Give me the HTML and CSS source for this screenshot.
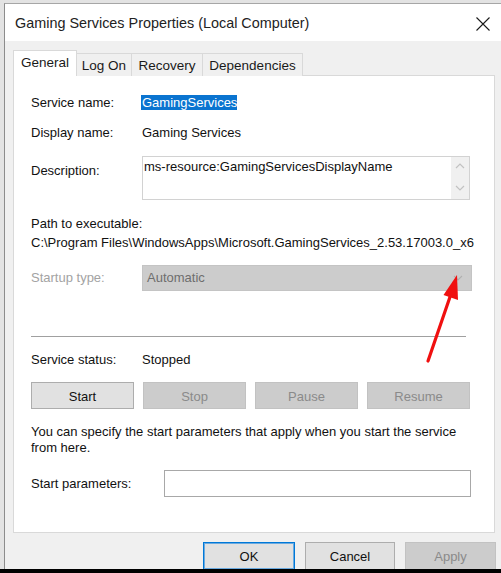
FILE: index.html
```html
<!DOCTYPE html>
<html>
<head>
<meta charset="utf-8">
<link rel="stylesheet" href="styles.css">
</head>
<body>
<div class="page">
  <div class="dialog">
    <div class="titlebar">
      <span class="title">Gaming Services Properties (Local Computer)</span>
      <svg class="close" width="14" height="14" viewBox="0 0 14 14"><path d="M0.5 0.5 L13.5 13.5 M13.5 0.5 L0.5 13.5" stroke="#1a1a1a" stroke-width="1.1" fill="none"/></svg>
    </div>
    <div class="body">
      <div class="tabs">
        <div class="tab active">General</div>
        <div class="tab">Log On</div>
        <div class="tab">Recovery</div>
        <div class="tab">Dependencies</div>
      </div>
      <div class="panel">
        <div class="row r1">
          <span class="label">Service name:</span>
          <span class="value"><span class="selected">GamingServices</span></span>
        </div>
        <div class="row r2">
          <span class="label">Display name:</span>
          <span class="value">Gaming Services</span>
        </div>
        <div class="row r3">
          <span class="label">Description:</span>
          <div class="desc">
            <div class="desc-text">ms-resource:GamingServicesDisplayName</div>
            <div class="scroll">
              <svg width="10" height="6" viewBox="0 0 10 6"><path d="M1 5 L5 1 L9 5" stroke="#c2c2c2" stroke-width="1.2" fill="none"/></svg>
              <svg width="10" height="6" viewBox="0 0 10 6"><path d="M1 1 L5 5 L9 1" stroke="#c2c2c2" stroke-width="1.2" fill="none"/></svg>
            </div>
          </div>
        </div>
        <div class="path-label">Path to executable:</div>
        <div class="path">C:\Program Files\WindowsApps\Microsoft.GamingServices_2.53.17003.0_x6</div>
        <div class="row r5">
          <span class="label disabled">Startup type:</span>
          <div class="combo">
            <span>Automatic</span>
            <svg width="10" height="6" viewBox="0 0 10 6"><path d="M1 1 L5 5 L9 1" stroke="#b0b0b0" stroke-width="1.1" fill="none"/></svg>
          </div>
        </div>
        <div class="sep"></div>
        <div class="row r6">
          <span class="label">Service status:</span>
          <span class="value">Stopped</span>
        </div>
        <div class="btnrow">
          <div class="btn">Start</div>
          <div class="btn off">Stop</div>
          <div class="btn off">Pause</div>
          <div class="btn off">Resume</div>
        </div>
        <div class="note">You can specify the start parameters that apply when you start the service<br>from here.</div>
        <div class="row r7">
          <span class="label wide">Start parameters:</span>
          <div class="input"></div>
        </div>
      </div>
      <div class="footer">
        <div class="btn fbtn ok">OK</div>
        <div class="btn fbtn cancel">Cancel</div>
        <div class="btn fbtn off apply">Apply</div>
      </div>
    </div>
  </div>
  <div class="bottom"></div>
</div>
<svg class="arrow" width="501" height="573" viewBox="0 0 501 573">
  <line x1="428" y1="361" x2="451" y2="294" stroke="#f01010" stroke-width="3.2" stroke-linecap="round"/>
  <polygon points="457,275 443.5,295 458,300" fill="#f01010"/>
</svg>
</body>
</html>
```

FILE: styles.css
```css
html, body {
  margin: 0;
  padding: 0;
  height: 100%;
  overflow: hidden;
}
body {
  background: #e3e3e3;
  font-family: "Liberation Sans", Arial, sans-serif;
  font-size: 13px;
  color: #111;
  position: relative;
}
.page {
  display: flex;
  flex-direction: column;
  height: 573px;
  padding-top: 3px;
  box-sizing: border-box;
}
.dialog {
  margin-left: 4px;
  width: 497px;
  height: 566px;
  border-left: 1px solid #8c8c8c;
  border-top: 1px solid #a6a6a6;
  box-sizing: border-box;
  display: flex;
  flex-direction: column;
  background: #f0f0f0;
}
.titlebar {
  height: 37px;
  background: #fff;
  display: flex;
  align-items: center;
  padding-left: 10px;
  flex-shrink: 0;
}
.title {
  font-size: 14.4px;
  color: #222;
  flex: 1;
  padding-top: 1px;
}
.close {
  margin-right: 11px;
  margin-top: 2px;
}
.body {
  flex: 1;
  display: flex;
  flex-direction: column;
  padding: 9px 6px 0 8px;
}
.tabs {
  display: flex;
  align-items: flex-end;
  height: 26px;
  margin-bottom: -1px;
  position: relative;
  z-index: 1;
}
.tab {
  height: 23px;
  box-sizing: border-box;
  border: 1px solid #d9d9d9;
  border-bottom: none;
  border-left: none;
  background: #f0f0f0;
  display: flex;
  align-items: center;
  justify-content: center;
  font-size: 13.5px;
  color: #1a1a1a;
}
.tab:nth-child(2) { width: 55px; }
.tab:nth-child(3) { width: 71px; }
.tab:nth-child(4) { width: 100px; }
.tab.active {
  height: 26px;
  width: 64px;
  background: #fff;
  border-left: 1px solid #d9d9d9;
  padding-bottom: 3px;
}
.panel {
  height: 458px;
  box-sizing: border-box;
  background: #fff;
  border: 1px solid #d9d9d9;
  padding: 19px 0 0 17px;
  display: flex;
  flex-direction: column;
}
.row {
  display: flex;
  align-items: center;
  line-height: 16px;
}
.label {
  width: 111px;
  flex-shrink: 0;
}
.label.disabled { color: #a3a3a3; }
.label.wide { width: 133px; }
.selected {
  background: #0a74d0;
  color: #fff;
  padding: 0 0 0 1px;
  margin-left: -1px;
  display: inline-block;
  line-height: 15px;
}
.r2 { margin-top: 14px; }
.r3 {
  margin-top: 15px;
  align-items: flex-start;
}
.r3 .label { margin-top: 7px; }
.desc {
  width: 328px;
  height: 44px;
  box-sizing: border-box;
  border: 1px solid #d2d2d2;
  display: flex;
}
.desc-text {
  flex: 1;
  padding: 2px 0 0 1px;
}
.scroll {
  width: 18px;
  background: #f0f0f0;
  display: flex;
  flex-direction: column;
  align-items: center;
  justify-content: space-between;
  padding: 6px 0 8px;
}
.path-label {
  margin-top: 14px;
  line-height: 19px;
}
.path {
  line-height: 19px;
  white-space: nowrap;
}
.r5 { margin-top: 13px; }
.combo {
  width: 330px;
  height: 26px;
  box-sizing: border-box;
  background: #cccccc;
  border: 1px solid #c4c4c4;
  color: #6e6e6e;
  display: flex;
  align-items: center;
  justify-content: space-between;
  padding: 0 8px 0 4px;
}
.sep {
  margin-top: 45px;
  width: 435px;
  height: 1px;
  background: #a0a0a0;
}
.r6 { margin-top: 15px; }
.btnrow {
  margin-top: 14px;
  display: flex;
  gap: 9px;
}
.btn {
  width: 103px;
  height: 27px;
  box-sizing: border-box;
  background: #e1e1e1;
  border: 1px solid #adadad;
  display: flex;
  align-items: center;
  justify-content: center;
  color: #111;
  padding-top: 1px;
}
.btn.off {
  background: #cccccc;
  border-color: #c2c2c2;
  color: #8a8a8a;
}
.note {
  margin-top: 15px;
  line-height: 16px;
}
.r7 { margin-top: 14px; }
.input {
  width: 307px;
  height: 27px;
  box-sizing: border-box;
  border: 1px solid #a8a8a8;
  background: #fff;
}
.footer {
  display: flex;
  justify-content: flex-end;
  padding-top: 9px;
  margin-right: -1px;
  gap: 10px;
}
.fbtn { height: 28px; }
.ok {
  width: 92px;
  border: 1px solid #0078d7;
  box-shadow: inset 0 0 0 1px #6aaae0;
}
.cancel { width: 90px; }
.apply { width: 91px; }
.bottom {
  flex: 1;
  background: #000;
}
.arrow {
  position: absolute;
  left: 0;
  top: 0;
  pointer-events: none;
}
```
